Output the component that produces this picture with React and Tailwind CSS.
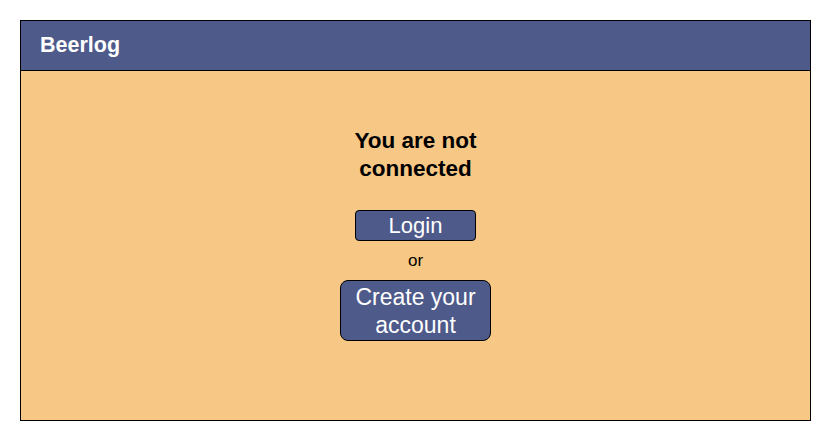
export default function App() {
  return (
    <div className="p-5 bg-white" style={{ fontFamily: '"Liberation Sans", Arial, sans-serif' }}>
      <div className="w-[791px] h-[401px] border border-black flex flex-col">
        <header className="h-[50px] shrink-0 bg-[#4e5a8a] border-b border-black flex items-center px-[19px]">
          <h1 className="text-white font-bold text-[21.5px]">Beerlog</h1>
        </header>
        <main className="flex-1 bg-[#f7c785] flex flex-col items-center pt-[56px]">
          <h2 className="w-[150px] text-center font-bold text-[22.5px] leading-[28px] text-black">
            You are not connected
          </h2>
          <button className="mt-[27px] w-[121px] h-[31px] bg-[#4e5a8a] border border-black rounded-[4px] text-white text-[22px] leading-[28px]">
            Login
          </button>
          <p className="mt-[10px] text-[17px] leading-[20px] text-black">or</p>
          <button className="mt-[9px] w-[151px] h-[61px] bg-[#4e5a8a] border border-black rounded-[8px] text-white text-[23px] leading-[28px]">
            Create your<br />account
          </button>
        </main>
      </div>
    </div>
  );
}
